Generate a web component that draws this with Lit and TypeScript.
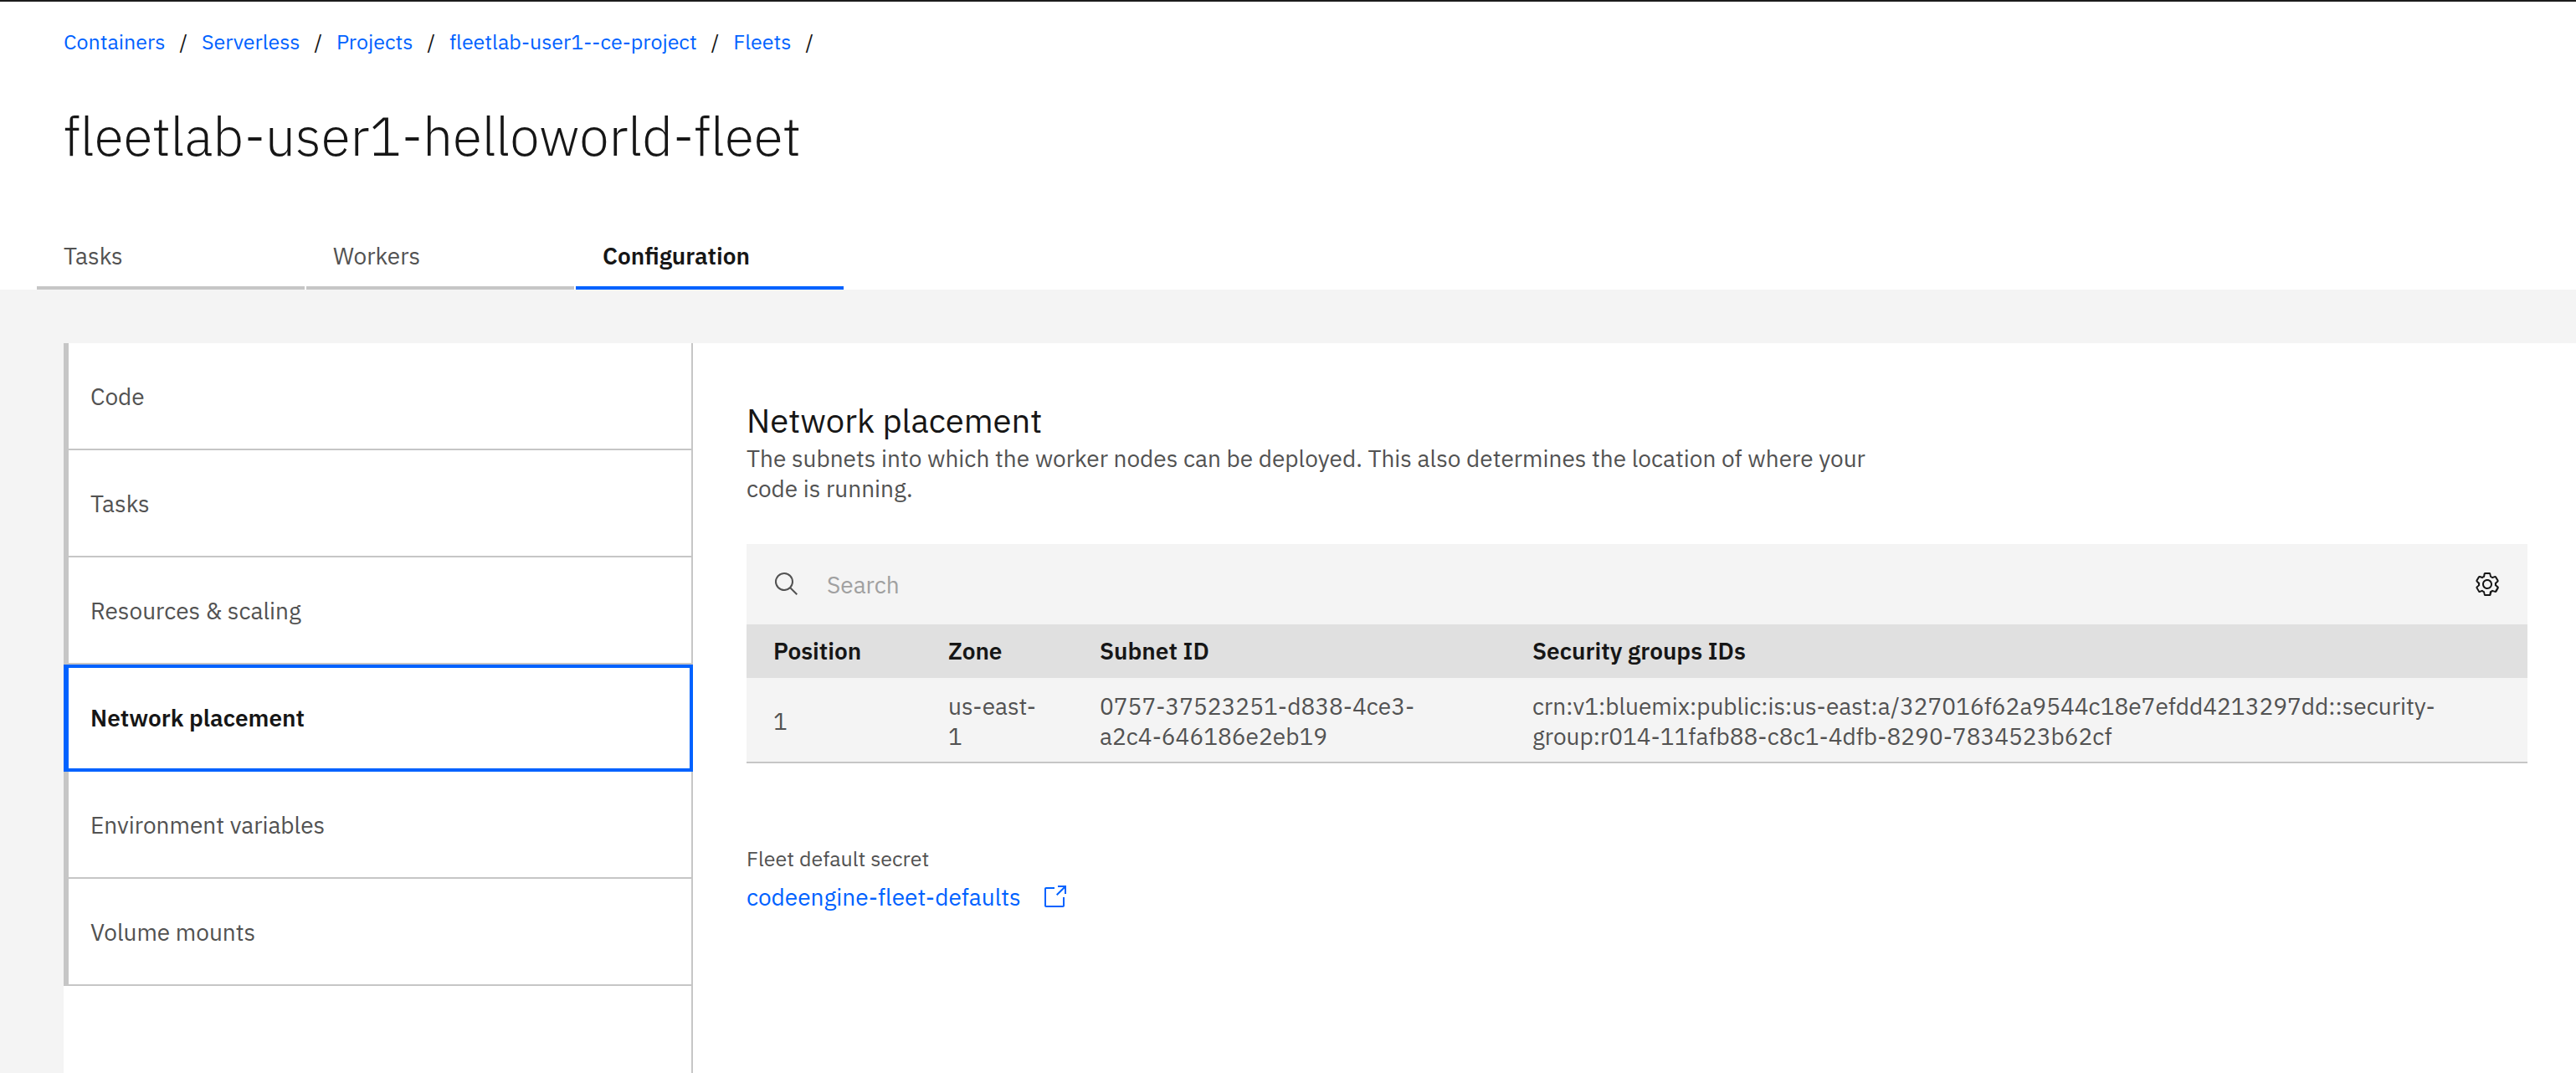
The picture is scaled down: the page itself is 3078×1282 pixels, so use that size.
import { LitElement, html, css, svg } from "lit";
import { customElement, state } from "lit/decorators.js";
import { classMap } from "lit/directives/class-map.js";

interface Subnet {
  position: number;
  zone: string;
  subnetId: string;
  securityGroup: string;
}

const CRUMBS = ["Containers", "Serverless", "Projects", "fleetlab-user1--ce-project", "Fleets"];
const TABS = ["Tasks", "Workers", "Configuration"];
const SECTIONS = [
  "Code",
  "Tasks",
  "Resources & scaling",
  "Network placement",
  "Environment variables",
  "Volume mounts",
];
const SUBNETS: Subnet[] = [
  {
    position: 1,
    zone: "us-east-1",
    subnetId: "0757-37523251-d838-4ce3-a2c4-646186e2eb19",
    securityGroup:
      "crn:v1:bluemix:public:is:us-east:a/327016f62a9544c18e7efdd4213297dd::security-group:r014-11fafb88-c8c1-4dfb-8290-7834523b62cf",
  },
];

const searchIcon = html`<svg class="icon" viewBox="0 0 32 32" aria-hidden="true">
  ${svg`<path d="M29,27.5859l-7.5521-7.5521a11.0177,11.0177,0,1,0-1.4141,1.4141L27.5859,29ZM4,13a9,9,0,1,1,9,9A9.01,9.01,0,0,1,4,13Z"/>`}
</svg>`;

const settingsIcon = html`<svg class="icon" viewBox="0 0 16 16" aria-hidden="true">
  ${svg`<path d="M13.5,8.4c0-0.1,0-0.3,0-0.4c0-0.1,0-0.3,0-0.4l1-0.8c0.4-0.3,0.4-0.9,0.2-1.3l-1.2-2C13.3,3.2,13,3,12.6,3c-0.1,0-0.2,0-0.3,0.1l-1.2,0.4c-0.2-0.1-0.4-0.3-0.7-0.4l-0.3-1.3C10.1,1.3,9.7,1,9.2,1H6.8c-0.5,0-0.9,0.3-1,0.8L5.6,3.1C5.3,3.2,5.1,3.3,4.9,3.4L3.7,3C3.6,3,3.5,3,3.4,3C3,3,2.7,3.2,2.5,3.5l-1.2,2C1.1,5.9,1.2,6.4,1.6,6.8l0.9,0.9c0,0.1,0,0.3,0,0.4c0,0.1,0,0.3,0,0.4L1.6,9.2c-0.4,0.3-0.5,0.9-0.2,1.3l1.2,2C2.7,12.8,3,13,3.4,13c0.1,0,0.2,0,0.3-0.1l1.2-0.4c0.2,0.1,0.4,0.3,0.7,0.4l0.3,1.3c0.1,0.5,0.5,0.8,1,0.8h2.4c0.5,0,0.9-0.3,1-0.8l0.3-1.3c0.2-0.1,0.4-0.2,0.7-0.4l1.2,0.4c0.1,0,0.2,0.1,0.3,0.1c0.4,0,0.7-0.2,0.9-0.5l1.1-2c0.2-0.4,0.2-0.9-0.2-1.3L13.5,8.4z M12.6,12l-1.7-0.6c-0.4,0.3-0.9,0.6-1.4,0.8L9.2,14H6.8l-0.4-1.8c-0.5-0.2-0.9-0.5-1.4-0.8L3.4,12l-1.2-2l1.4-1.2c-0.1-0.5-0.1-1.1,0-1.6L2.2,6l1.2-2l1.7,0.6C5.5,4.2,6,4,6.5,3.8L6.8,2h2.4l0.4,1.8c0.5,0.2,0.9,0.5,1.4,0.8L12.6,4l1.2,2l-1.4,1.2c0.1,0.5,0.1,1.1,0,1.6l1.4,1.2L12.6,12z M8,11c-1.7,0-3-1.3-3-3s1.3-3,3-3s3,1.3,3,3C11,9.6,9.7,11,8,11C8,11,8,11,8,11z M8,6C6.9,6,6,6.8,6,7.9C6,7.9,6,8,6,8c0,1.1,0.8,2,1.9,2c0,0,0.1,0,0.1,0c1.1,0,2-0.8,2-1.9c0,0,0-0.1,0-0.1C10,6.9,9.2,6,8,6C8.1,6,8,6,8,6z"/>`}
</svg>`;

const launchIcon = html`<svg class="icon" viewBox="0 0 16 16" aria-hidden="true">
  ${svg`<path d="M13,14H3c-0.6,0-1-0.4-1-1V3c0-0.6,0.4-1,1-1h5v1H3v10h10V8h1v5C14,13.6,13.6,14,13,14z"/><path d="M10,1v1h3.3L9,6.3L9.7,7L14,2.7V6h1V1H10z"/>`}
</svg>`;

@customElement("app-root")
export class AppRoot extends LitElement {
  static styles = css`
    :host {
      --link: #0062ff;
      --text: #161616;
      --text-secondary: #525252;
      --border: #c6c6c6;
      --layer: #f4f4f4;
      display: flex;
      flex-direction: column;
      min-height: 100vh;
      background: #fff;
      color: var(--text);
      font-family: "IBM Plex Sans", Roboto, "Liberation Sans", sans-serif;
      font-size: 28px;
      line-height: 36px;
    }
    *, *::before, *::after { box-sizing: border-box; }
    button, input {
      margin: 0;
      padding: 0;
      border: 0;
      border-radius: 0;
      background: none;
      color: inherit;
      font: inherit;
      text-align: left;
      outline: none;
    }
    button { cursor: pointer; }
    a { color: var(--link); text-decoration: none; }
    .icon { display: block; flex: none; width: 32px; height: 32px; fill: currentColor; }

    .header { border-top: 2px solid #1c1c1c; padding-top: 32px; }
    .crumbs {
      display: flex;
      flex-wrap: wrap;
      gap: 17px;
      margin: 0;
      padding: 0 76px;
      list-style: none;
      font-size: 25px;
      line-height: 32px;
    }
    .crumb { display: flex; gap: 17px; }
    .crumb::after { content: "/"; }
    .title {
      margin: 56px 0 64px;
      padding: 0 76px;
      font-size: 64px;
      font-weight: 300;
      line-height: 80px;
    }
    .tabs { display: flex; gap: 2px; padding-left: 44px; }
    .tab {
      width: 320px;
      padding: 22px 32px 18px;
      border-bottom: 4px solid var(--border);
      color: var(--text-secondary);
    }
    .tab.active { border-color: var(--link); color: var(--text); font-weight: 600; }

    .main {
      flex: 1;
      display: flex;
      padding: 64px 0 0 76px;
      background: var(--layer);
    }
    .panel { flex: 1; display: grid; grid-template-columns: 752px 1fr; background: #fff; }
    .side { border-right: 2px solid var(--border); }
    .section {
      display: block;
      width: 100%;
      padding: 46px 26px 44px;
      border-left: 6px solid var(--border);
      border-bottom: 2px solid var(--border);
      color: var(--text-secondary);
    }
    .section.active {
      width: calc(100% + 2px);
      padding: 42px 22px 42px 26px;
      border: 4px solid var(--link);
      border-left-width: 6px;
      color: var(--text);
      font-weight: 600;
    }

    .content { min-width: 0; padding: 64px 58px 64px 64px; }
    .heading { margin: 0; font-size: 40px; font-weight: 400; line-height: 56px; }
    .description { max-width: 1392px; margin: 0 0 48px; color: var(--text-secondary); }
    .toolbar {
      display: flex;
      align-items: center;
      gap: 32px;
      height: 96px;
      padding: 0 32px;
      background: var(--layer);
    }
    .search-label { color: var(--text-secondary); }
    .search { flex: 1; min-width: 0; height: 64px; }
    .search::placeholder { color: #a0a0a0; opacity: 1; }
    .table { width: 100%; border-collapse: separate; border-spacing: 0; table-layout: fixed; }
    .col-position { width: 209px; }
    .col-zone { width: 181px; }
    .col-subnet { width: 517px; }
    .th { padding: 14px 32px; background: #e0e0e0; font-weight: 600; text-align: left; }
    .td {
      padding: 16px 32px 12px;
      border-bottom: 2px solid var(--border);
      background: var(--layer);
      color: var(--text-secondary);
      vertical-align: middle;
      overflow-wrap: anywhere;
    }
    .td.subnet { padding-right: 96px; }
    .secret-label { margin: 96px 0 10px; color: var(--text-secondary); font-size: 25px; }
    .secret-link { display: inline-flex; align-items: center; gap: 24px; }
  `;

  @state() private tab = "Configuration";
  @state() private section = "Network placement";

  private renderRow(row: Subnet) {
    return html`<tr>
      <td class="td">${row.position}</td>
      <td class="td">${row.zone}</td>
      <td class="td subnet">${row.subnetId}</td>
      <td class="td">${row.securityGroup}</td>
    </tr>`;
  }

  render() {
    return html`
      <header class="header">
        <nav aria-label="Breadcrumb">
          <ol class="crumbs">
            ${CRUMBS.map((c) => html`<li class="crumb"><a href="#">${c}</a></li>`)}
          </ol>
        </nav>
        <h1 class="title">fleetlab-user1-helloworld-fleet</h1>
        <div class="tabs" role="tablist">
          ${TABS.map(
            (t) => html`<button
              class=${classMap({ tab: true, active: t === this.tab })}
              role="tab"
              aria-selected=${t === this.tab}
              @click=${() => (this.tab = t)}
            >${t}</button>`
          )}
        </div>
      </header>
      <main class="main">
        <div class="panel">
          <nav class="side" aria-label="Configuration sections">
            ${SECTIONS.map(
              (s) => html`<button
                class=${classMap({ section: true, active: s === this.section })}
                @click=${() => (this.section = s)}
              >${s}</button>`
            )}
          </nav>
          <section class="content">
            <h2 class="heading">Network placement</h2>
            <p class="description">
              The subnets into which the worker nodes can be deployed. This also determines the
              location of where your code is running.
            </p>
            <div class="toolbar">
              <label class="search-label" for="search" aria-label="Search">${searchIcon}</label>
              <input class="search" id="search" type="text" placeholder="Search" />
              <button aria-label="Settings">${settingsIcon}</button>
            </div>
            <table class="table">
              <colgroup>
                <col class="col-position" />
                <col class="col-zone" />
                <col class="col-subnet" />
                <col />
              </colgroup>
              <thead>
                <tr>
                  <th class="th">Position</th>
                  <th class="th">Zone</th>
                  <th class="th">Subnet ID</th>
                  <th class="th">Security groups IDs</th>
                </tr>
              </thead>
              <tbody>
                ${SUBNETS.map((r) => this.renderRow(r))}
              </tbody>
            </table>
            <p class="secret-label">Fleet default secret</p>
            <a class="secret-link" href="#">codeengine-fleet-defaults ${launchIcon}</a>
          </section>
        </div>
      </main>
    `;
  }
}
